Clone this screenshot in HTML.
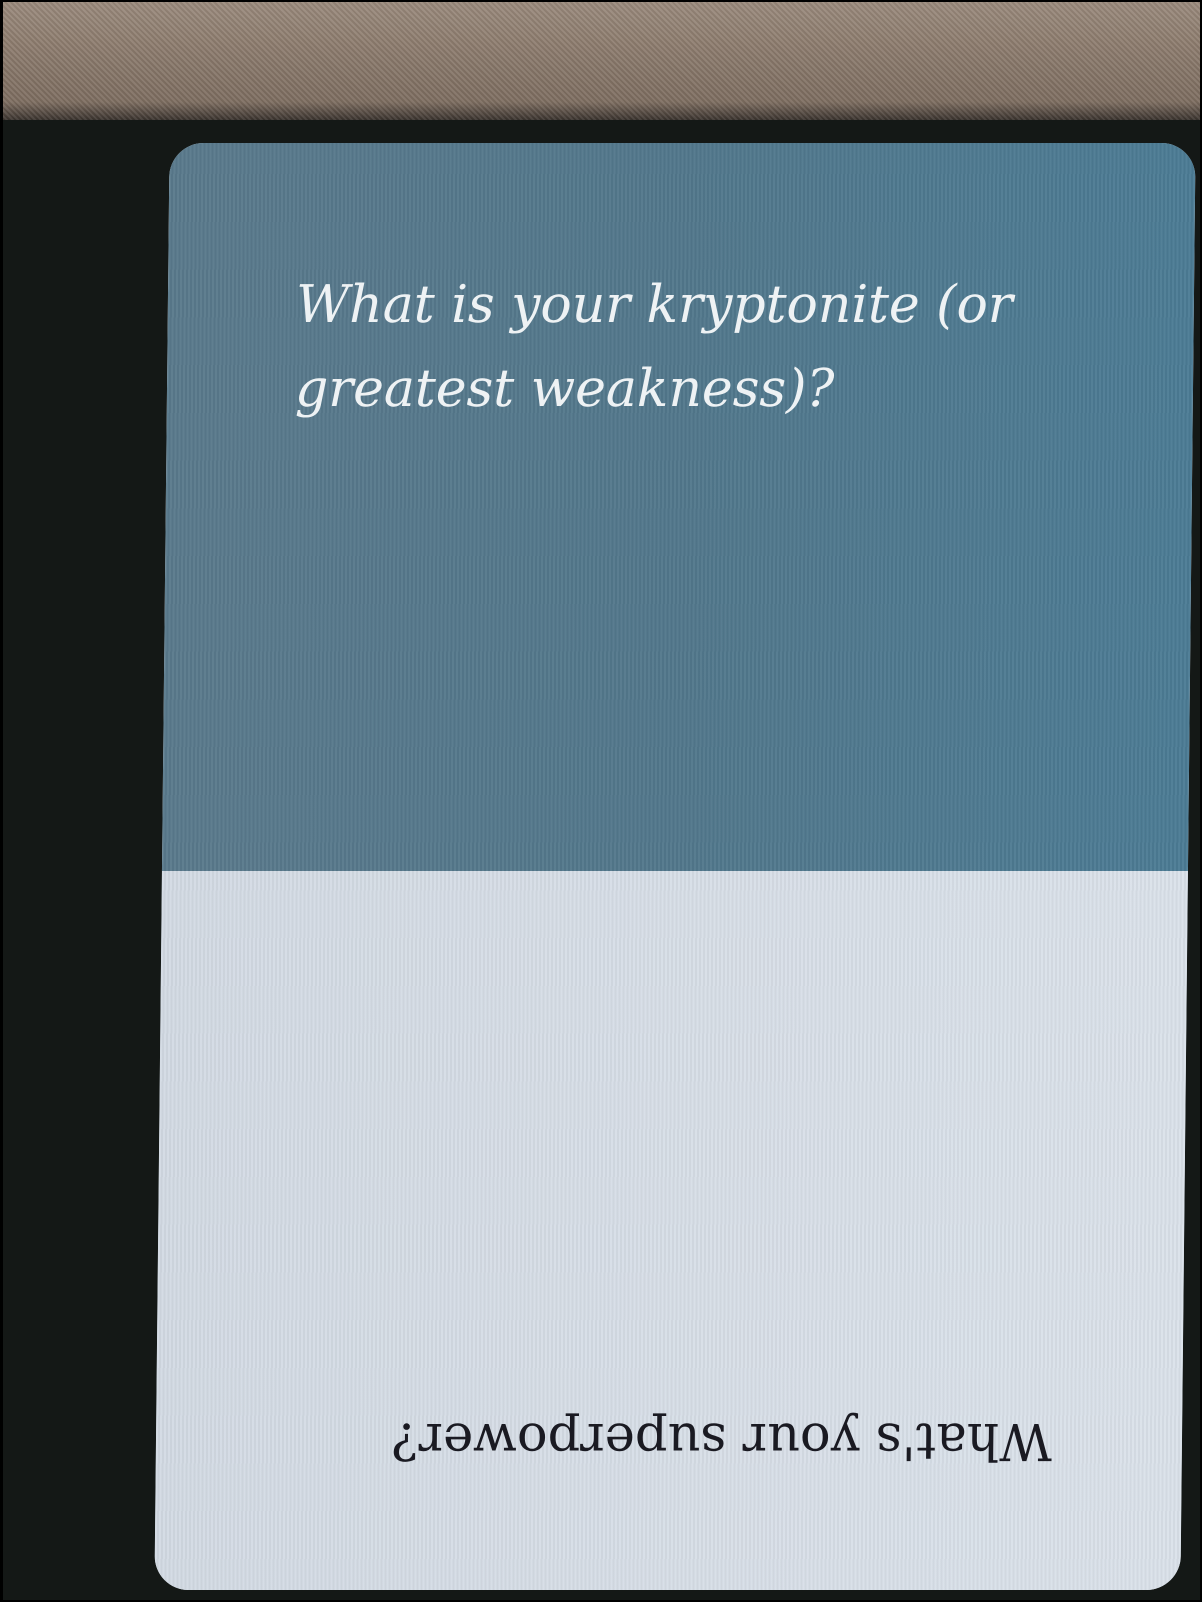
<!DOCTYPE html>
<html><head><meta charset="utf-8"><style>
html,body{margin:0;padding:0}
body{width:1202px;height:1602px;position:relative;overflow:hidden;background:#141816;font-family:"DejaVu Serif","Liberation Serif",serif}
.top{position:absolute;left:0;top:0;width:1202px;height:120px;background:linear-gradient(180deg,#9a8a7c 0%,#8c7b6d 40%,#7d6d60 85%,#3a332e 100%)}
.top:after{content:"";position:absolute;inset:0;background:repeating-linear-gradient(45deg,rgba(255,255,255,.08) 0 2px,rgba(0,0,0,.06) 2px 4px)}
.frame{position:absolute;inset:0;border:2px solid #000;border-left:3px solid #000;box-sizing:border-box;pointer-events:none}
.card{position:absolute;left:162px;top:143px;width:1026px;height:1447px;border-radius:34px;overflow:hidden;transform:skewX(-0.6deg);transform-origin:50% 50%;background:#d6dee7}
.upper{position:absolute;left:0;top:0;width:100%;height:728px;background:linear-gradient(90deg,#5a7a8c 0%,#52788c 50%,#4c7c95 100%)}
.upper:after,.lower:after{content:"";position:absolute;inset:0;background:repeating-linear-gradient(90deg,rgba(255,255,255,.04) 0 2px,rgba(0,0,0,.04) 2px 4px)}
.lower{position:absolute;left:0;top:728px;width:100%;height:719px;background:linear-gradient(90deg,#d3dbe4,#dbe2ea)}
.q1{position:absolute;left:128px;top:120px;color:#eef2f4;font-style:italic;font-size:52px;line-height:84px;width:900px;white-space:nowrap}
.q2{position:absolute;left:226px;top:1268px;width:670px;color:#1a1a22;font-size:51px;transform:rotate(180deg);white-space:nowrap;text-align:left}
</style></head><body>
<div class="top"></div>
<div class="card">
<div class="upper"></div>
<div class="lower"></div>
<div class="q1">What is your kryptonite (or<br>greatest weakness)?</div>
<div class="q2">What's your superpower?</div>
</div>
<div class="frame"></div>
</body></html>
